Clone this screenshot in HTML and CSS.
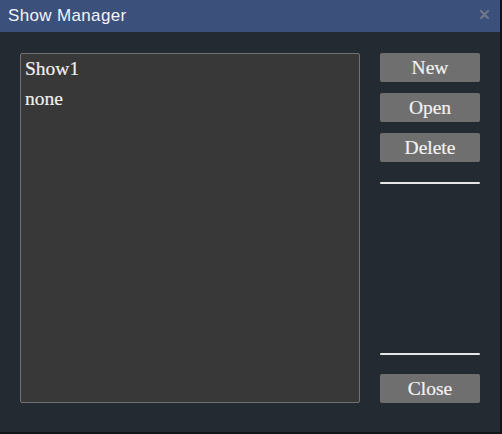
FILE: index.html
```html
<!DOCTYPE html>
<html>
<head>
<meta charset="utf-8">
<link rel="stylesheet" href="styles.css">
</head>
<body>
<div class="window">
  <div class="titlebar">
    <span class="title">Show Manager</span>
    <svg class="close-x" width="9" height="9" viewBox="0 0 9 9"><path d="M1 1L8 8M8 1L1 8" stroke="#6f7788" stroke-width="2.2" stroke-linecap="round"/></svg>
  </div>
  <div class="content">
    <div class="list">
      <div class="item">Show1</div>
      <div class="item">none</div>
    </div>
    <div class="actions">
      <button class="btn">New</button>
      <button class="btn">Open</button>
      <button class="btn">Delete</button>
      <div class="sep first"></div>
      <div class="spacer"></div>
      <div class="sep"></div>
      <button class="btn close">Close</button>
    </div>
  </div>
</div>
</body>
</html>
```
FILE: styles.css
```css
html, body {
  margin: 0;
  padding: 0;
}
body {
  background: #121518;
  width: 502px;
  height: 434px;
  overflow: hidden;
}
.window {
  width: 500px;
  height: 432px;
  background: #232a32;
  display: flex;
  flex-direction: column;
}
.titlebar {
  height: 32px;
  background: #3c507c;
  display: flex;
  align-items: center;
  justify-content: space-between;
  padding: 0 11px 0 8px;
  box-sizing: border-box;
}
.title {
  font-family: "Liberation Sans", Arial, sans-serif;
  font-size: 17px;
  letter-spacing: 0.35px;
  color: #f2f4f8;
  margin-top: -1px;
}
.close-x {
  display: block;
  margin-top: -3px;
}
.content {
  display: flex;
  padding: 21px 20px 0 20px;
  gap: 20px;
}
.list {
  width: 340px;
  height: 350px;
  box-sizing: border-box;
  background: #383838;
  border: 1px solid #707070;
  border-radius: 2px;
  padding: 0 4px;
}
.item {
  font-family: "Liberation Serif", "Times New Roman", serif;
  font-size: 19.5px;
  line-height: 30px;
  color: #f0f0f0;
  -webkit-text-stroke: 0.2px #f0f0f0;
}
.actions {
  width: 100px;
  height: 350px;
  display: flex;
  flex-direction: column;
}
.btn {
  height: 29px;
  margin: 0 0 11px 0;
  padding: 0;
  border: none;
  border-radius: 2px;
  background: #6f6f6f;
  color: #f2f2f2;
  font-family: "Liberation Serif", "Times New Roman", serif;
  font-size: 19.5px;
  line-height: 29px;
  -webkit-text-stroke: 0.2px #f2f2f2;
}
.btn.close {
  margin: 19px 0 0 0;
}
.sep {
  height: 2px;
  background: #e6e6e6;
  border-radius: 1px;
}
.sep.first {
  margin-top: 9px;
}
.spacer {
  flex: 1;
}
```
